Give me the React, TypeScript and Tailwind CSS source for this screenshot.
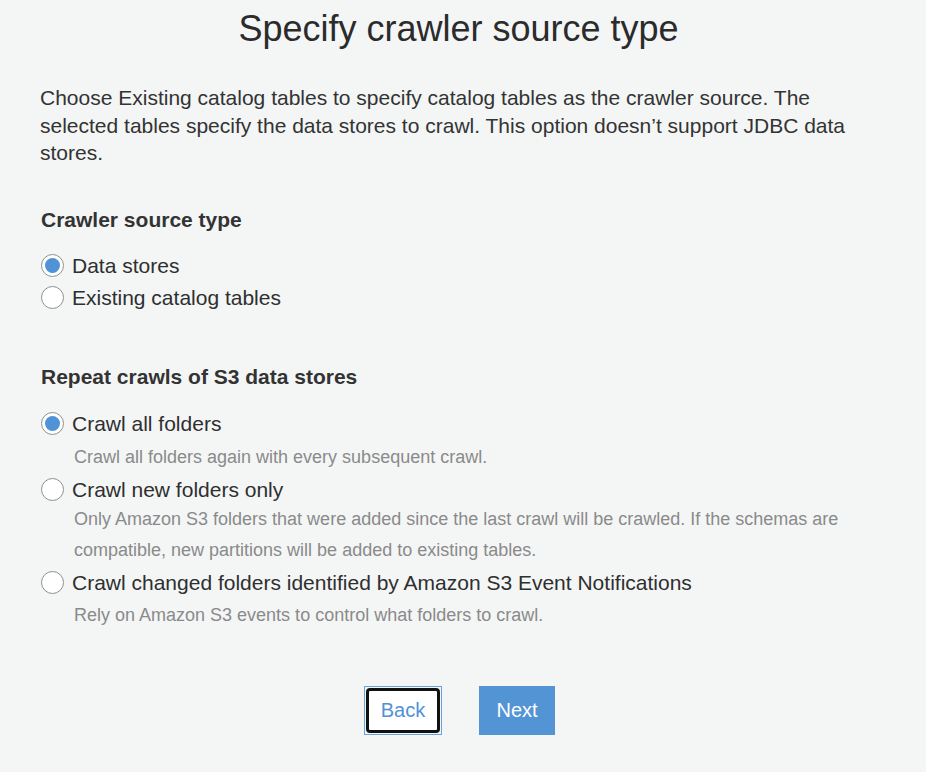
import React from "react";

function Radio({ checked }: { checked?: boolean }) {
  return (
    <span className="flex h-[23px] w-[23px] shrink-0 items-center justify-center rounded-full border border-[#8f8f8f] bg-white">
      {checked && <span className="h-[15px] w-[15px] rounded-full bg-[#4f92d6]" />}
    </span>
  );
}

export default function App() {
  return (
    <div
      className="min-h-[772px] w-full bg-[#f4f6f6] text-[#2f2f2f]"
      style={{ fontFamily: '"Liberation Sans", Arial, sans-serif' }}
    >
      <div className="pr-[9px] pt-[9px] text-center text-[36px] leading-[40px] text-[#2b2b2b]">
        Specify crawler source type
      </div>
      <p className="ml-[40px] mr-[60px] mt-[35px] text-[21px] leading-[27.5px] text-[#333]">
        Choose Existing catalog tables to specify catalog tables as the crawler source. The selected tables specify
        the data stores to crawl. This option doesn’t support JDBC data stores.
      </p>

      <div className="ml-[41px] mt-[41px] text-[21px] font-bold leading-[24px] text-[#333]">Crawler source type</div>
      <div className="ml-[41px] mt-[22.5px] flex flex-col gap-[9px]">
        <label className="flex items-center gap-[8px] text-[21px] leading-[23px]">
          <Radio checked />
          <span>Data stores</span>
        </label>
        <label className="flex items-center gap-[8px] text-[21px] leading-[23px]">
          <Radio />
          <span>Existing catalog tables</span>
        </label>
      </div>

      <div className="ml-[41px] mt-[55.5px] text-[21px] font-bold leading-[24px] text-[#333]">
        Repeat crawls of S3 data stores
      </div>
      <div className="ml-[41px] mt-[23px] flex flex-col">
        <label className="flex items-center gap-[8px] text-[21px] leading-[23px]">
          <Radio checked />
          <span>Crawl all folders</span>
        </label>
        <div className="ml-[33px] mt-[7px] text-[18px] leading-[31px] text-[#8a8a8a]">
          Crawl all folders again with every subsequent crawl.
        </div>
        <label className="mt-[5px] flex items-center gap-[8px] text-[21px] leading-[23px]">
          <Radio />
          <span>Crawl new folders only</span>
        </label>
        <div className="ml-[33px] mr-[60px] mt-[3px] text-[18px] leading-[31px] text-[#8a8a8a]">
          Only Amazon S3 folders that were added since the last crawl will be crawled. If the schemas are compatible,
          new partitions will be added to existing tables.
        </div>
        <label className="mt-[5px] flex items-center gap-[8px] text-[21px] leading-[23px]">
          <Radio />
          <span>Crawl changed folders identified by Amazon S3 Event Notifications</span>
        </label>
        <div className="ml-[33px] mt-[6px] text-[18px] leading-[31px] text-[#8a8a8a]">
          Rely on Amazon S3 events to control what folders to crawl.
        </div>
      </div>

      <div className="mt-[55px] flex justify-center gap-[37px] pr-[7px]">
        <div className="border border-[#6aa3dc] p-[1px]">
          <button className="h-[45px] w-[74px] rounded-[4px] border-[3px] border-[#111] bg-white text-[20px] text-[#4f92d6]">
            Back
          </button>
        </div>
        <button className="h-[49px] w-[76px] bg-[#5294d4] text-[20px] text-white">Next</button>
      </div>
    </div>
  );
}
